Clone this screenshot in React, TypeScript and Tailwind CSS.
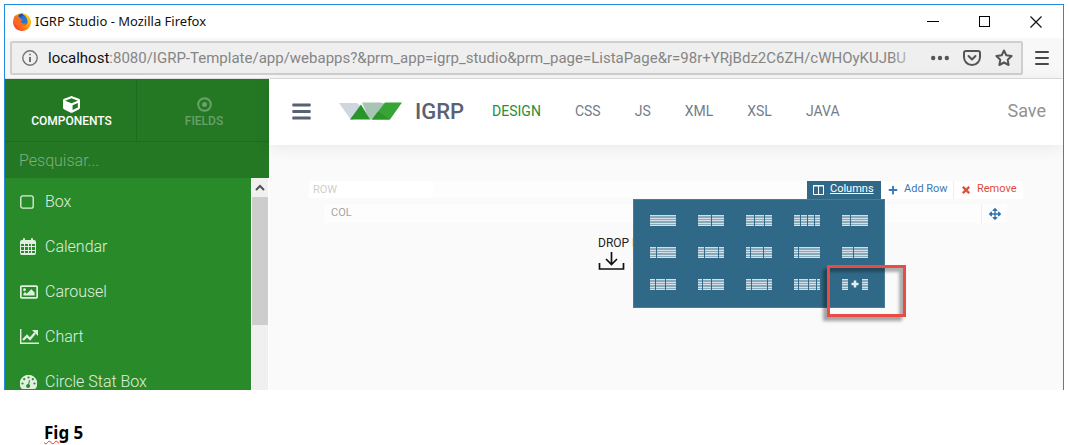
import { useState } from "react";
import type { ReactNode } from "react";
import {
  FaCube,
  FaBars,
  FaPlus,
  FaTimes,
  FaArrowsAlt,
  FaRegImage,
} from "react-icons/fa";

const BAR_WIDTHS: number[][] = [
  [26],
  [13, 13],
  [8, 9, 8],
  [6, 6, 6, 6],
  [8, 17],
  [6, 20],
  [6, 14, 6],
  [4, 13, 9],
  [4, 22],
  [11, 15],
  [5, 9, 11],
  [4, 9, 13],
  [5, 16, 5],
  [4, 9, 7, 4],
];

function Stripes({ widths }: { widths: number[] }) {
  const total = widths.reduce((a, b) => a + b, 0);
  const usable = 26 - (widths.length - 1);
  let x = 0;
  return (
    <svg width="26" height="11" viewBox="0 0 26 11" aria-hidden="true">
      {widths.map((w, i) => {
        const width = Math.round((w / total) * usable);
        const start = x;
        x += width + 1;
        return (
          <g key={i}>
            <rect x={start} y="0" width={width} height="11" fill="#87a9bb" />
            {[0, 3, 5, 8, 10].map((y) => (
              <rect key={y} x={start} y={y} width={width} height="1" fill="#d3e0e7" />
            ))}
          </g>
        );
      })}
    </svg>
  );
}

function FirefoxIcon() {
  return (
    <svg width="18" height="18" viewBox="0 0 18 18" aria-hidden="true">
      <defs>
        <linearGradient id="flame" x1="1" y1="0" x2="0" y2="1">
          <stop offset="0" stopColor="#ffe226" />
          <stop offset="0.5" stopColor="#ff9400" />
          <stop offset="1" stopColor="#f0224b" />
        </linearGradient>
      </defs>
      <path d="M9 0c5 1 9 4 9 9s-4 9-9 9-9-4-9-9c0-3 1-5 3-7C5 1 7 0 9 0Z" fill="url(#flame)" />
      <circle cx="9" cy="7.500" r="5.800" fill="#2675d5" />
      <path d="M5 2 9 .5l2 2-4 2Z" fill="#244f9d" />
      <path d="M1 5c0-1 1-2 2-2.500L4 4q2-.5 3 .5c0 1.500 1 1.500 3 2L8 8c0 2 2 3 5 2-1 3-3 4-6 3-4-1-6-4-6-8Z" fill="#ff6a1b" />
      <path d="M11 1c5 2 6 6 4 10 0-4-1-6-4-10Z" fill="#ffc21c" />
    </svg>
  );
}

function Logo() {
  return (
    <svg width="64" height="18" viewBox="0 0 64 18" role="img" aria-label="IGRP logo">
      <path d="M0 1h18l5 4-9 13h-2Z" fill="#d0d6df" />
      <path d="M23 .5h18l5 1-11 16h-5Z" fill="#a8c4b5" />
      <path d="M22 2.500 11 17.500h20Z" fill="#29942b" />
      <path d="M46 .5h17l-12 17H33Z" fill="#37a436" />
      <path d="m39 9.500-6 8h18Z" fill="#299629" />
    </svg>
  );
}

function BoxIcon() {
  return (
    <svg width="14" height="14" viewBox="0 0 14 14" fill="none" stroke="currentColor" strokeWidth="1.300" aria-hidden="true">
      <rect x=".8" y=".8" width="12.400" height="12.400" rx="2" />
    </svg>
  );
}

function CalendarIcon() {
  return (
    <svg width="16" height="17" viewBox="0 0 16 17" aria-hidden="true">
      <path fill="currentColor" fillRule="evenodd" d="M2 2h1V1q0-1 1-1t1 1v1h6V1q0-1 1-1t1 1v1h1q2 0 2 2v11q0 2-2 2H2q-2 0-2-2V4q0-2 2-2ZM1 6v2h3V6Zm4 0v2h3V6Zm4 0v2h2V6Zm3 0v2h3V6ZM1 9v3h3V9Zm4 0v3h3V9Zm4 0v3h2V9Zm3 0v3h3V9ZM1 13v2h3v-2Zm4 0v2h3v-2Zm4 0v2h2v-2Zm3 0v2h3v-2Z" />
    </svg>
  );
}

function ChartIcon() {
  return (
    <svg width="19" height="15" viewBox="0 0 19 15" fill="none" aria-hidden="true">
      <path d="M.7 0v14.2H19" stroke="currentColor" strokeWidth="1.4" />
      <path d="m3 11 4-4 3 3 5-6" stroke="currentColor" strokeWidth="2.3" />
      <path d="M12 1h6v6Z" fill="currentColor" />
    </svg>
  );
}

function GaugeIcon() {
  return (
    <svg width="17" height="14" viewBox="0 0 17 14" aria-hidden="true">
      <path d="M8.5 0A8.5 8.5 0 0 0 1 13q.5 1 1.500 1h12q1 0 1.500-1A8.500 8.500 0 0 0 8.500 0Z" fill="currentColor" />
      <g fill="#298a29">
        <circle cx="8.500" cy="2.500" r="1.100" />
        <circle cx="4.200" cy="4.200" r="1.100" />
        <circle cx="12.800" cy="4.200" r="1.100" />
        <circle cx="2.500" cy="8.500" r="1.100" />
        <circle cx="14.500" cy="8.500" r="1.100" />
        <path d="m9 5 1 .3-.8 4a2 2 0 1 1-1-.3Z" />
      </g>
    </svg>
  );
}

const COMPONENTS: { name: string; icon: ReactNode }[] = [
  { name: "Box", icon: <BoxIcon /> },
  { name: "Calendar", icon: <CalendarIcon /> },
  { name: "Carousel", icon: <FaRegImage size={18} /> },
  { name: "Chart", icon: <ChartIcon /> },
  { name: "Circle Stat Box", icon: <GaugeIcon /> },
];

function TitleBar() {
  return (
    <header className="flex h-[33px] shrink-0 items-center bg-white pl-2 pr-[21px]">
      <FirefoxIcon />
      <h1 className="ml-1 grow font-['Noto_Sans','Open_Sans',sans-serif] text-[13px] text-[#111]">IGRP Studio - Mozilla Firefox</h1>
      <div className="flex items-center gap-10">
        <button aria-label="Minimize" className="flex h-4 w-3 items-center"><span className="h-px w-full bg-black" /></button>
        <button aria-label="Maximize" className="size-[11px] border border-black" />
        <button aria-label="Close">
          <svg width="12" height="12" viewBox="0 0 12 12" stroke="#111" strokeWidth="1.2"><path d="m.5.5 11 11m0-11-11 11" /></svg>
        </button>
      </div>
    </header>
  );
}

function AddressBar() {
  return (
    <div className="flex h-[41px] shrink-0 items-center gap-3 border-b border-[#dedede] bg-[#f8f8f8] pl-[5px] pr-3.5">
      <div className="flex h-[34px] min-w-0 grow items-center rounded-xs border-2 border-[#cfcfcf] bg-[#efefef] pl-2.5 pr-2">
        <svg width="16" height="16" viewBox="0 0 16 16" fill="none" stroke="#737373" className="shrink-0" aria-hidden="true">
          <circle cx="8" cy="8" r="7.200" strokeWidth="1.400" />
          <path d="M8 7v5" strokeWidth="2" />
          <circle cx="8" cy="4.500" r=".6" />
        </svg>
        <div className="relative ml-2.5 min-w-0 grow overflow-hidden whitespace-nowrap font-[Roboto,'Noto_Sans',sans-serif] text-[15px] text-[#858585]">
          <span className="text-[#111]">localhost</span>:8080/IGRP-Template/app/webapps?&amp;prm_app=igrp_studio&amp;prm_page=ListaPage&amp;r=98r+YRjBdz2C6ZH/cWHOyKUJBU
          <span className="absolute inset-y-0 right-0 w-8 bg-linear-to-r from-transparent to-[#efefef]" />
        </div>
        <div className="ml-2 flex shrink-0 items-center gap-3.5 text-[#555]">
          <button aria-label="Page actions">
            <svg width="18" height="6" viewBox="0 0 18 6" fill="currentColor"><circle cx="2.200" cy="3" r="2.200" /><circle cx="9" cy="3" r="2.200" /><circle cx="15.800" cy="3" r="2.200" /></svg>
          </button>
          <button aria-label="Save to Pocket">
            <svg width="18" height="16" viewBox="0 0 18 16" fill="none" stroke="currentColor" strokeWidth="2" strokeLinecap="round" strokeLinejoin="round"><path d="M3 1h12q2 0 2 2v4c0 4-3 8-8 8S1 11 1 7V3q0-2 2-2ZM5.500 6 9 9.500 12.500 6" /></svg>
          </button>
          <button aria-label="Bookmark this page">
            <svg width="18" height="18" viewBox="0 0 18 18" fill="none" stroke="currentColor" strokeWidth="2" strokeLinejoin="round"><path d="m9 1.500 2.300 4.800 5.300.7-3.900 3.700.9 5.300L9 13.500 4.400 16l.9-5.300L1.400 7l5.300-.7Z" /></svg>
          </button>
        </div>
      </div>
      <button aria-label="Open menu" className="text-[#484848]">
        <svg width="14" height="14" viewBox="0 0 14 14" stroke="currentColor" strokeWidth="2" strokeLinecap="round"><path d="M1 1h12M1 7h12M1 13h12" /></svg>
      </button>
    </div>
  );
}

function Sidebar() {
  return (
    <aside className="flex w-[264px] shrink-0 flex-col bg-[#298a29]">
      <div className="grid h-[63px] shrink-0 grid-cols-2 border-b border-[#1e6b22] bg-[#247824] text-xs font-medium">
        <button className="flex flex-col items-center border-r border-[#1e6b22] pl-0.5 pt-[17px] leading-4 text-white">
          <FaCube size={17} />
          <span>COMPONENTS</span>
        </button>
        <button className="flex flex-col items-center pl-0.5 pt-[17px] leading-4 text-[#69a169]">
          <svg width="17" height="17" viewBox="0 0 17 17" fill="none" stroke="currentColor" strokeWidth="2" aria-hidden="true"><circle cx="8.500" cy="8.500" r="6.300" /><circle cx="8.500" cy="8.500" r="2.500" fill="currentColor" stroke="none" /></svg>
          <span>FIELDS</span>
        </button>
      </div>
      <input aria-label="Pesquisar" placeholder="Pesquisar..." className="h-9 w-full shrink-0 bg-[#247824] px-3.5 text-base font-light text-white outline-none placeholder:text-[#80ae80]" />
      <div className="flex min-h-0 grow">
        <ul className="grow overflow-hidden pt-px">
          {COMPONENTS.map((c) => (
            <li key={c.name}>
              <a href="#" className="flex h-[45px] items-center pl-[15px] text-base font-light text-[#e0efe0]">
                <span className="w-[25px]">{c.icon}</span>
                {c.name}
              </a>
            </li>
          ))}
        </ul>
        <div className="w-[18px] border-x border-white bg-[#f0f0f0]" aria-hidden="true">
          <div className="flex h-[19px] items-center justify-center">
            <svg width="10" height="7" viewBox="0 0 10 7" fill="none" stroke="#505050" strokeWidth="2"><path d="m1 6 4-4 4 4" /></svg>
          </div>
          <div className="h-32 bg-[#cdcdcd]" />
        </div>
      </div>
    </aside>
  );
}

function TopNav() {
  return (
    <nav className="relative flex h-[66px] shrink-0 items-center bg-white pb-0.5 pl-[22px] pr-[17px] shadow-[0_2px_16px_rgba(0,0,0,0.08)]">
      <button aria-label="Toggle menu" className="text-[#596174]"><FaBars size={21} /></button>
      <a href="#" className="ml-[27px] flex items-center gap-3">
        <Logo />
        <span className="text-[22px] font-medium text-[#596174]">IGRP</span>
      </a>
      <div className="ml-7 flex grow gap-[34px] text-sm text-[#747c8a]">
        <a href="#" className="text-[#278e36]">DESIGN</a>
        <a href="#">CSS</a>
        <a href="#">JS</a>
        <a href="#">XML</a>
        <a href="#">XSL</a>
        <a href="#">JAVA</a>
      </div>
      <button className="text-lg text-[#929292]">Save</button>
    </nav>
  );
}

function ColumnPicker() {
  return (
    <div className="absolute right-[-4px] top-full z-10 grid h-[109px] w-[252px] grid-cols-5 content-start border border-[#4b7c97] bg-[#306987] px-[5px] pt-[5px]">
      {BAR_WIDTHS.map((w, i) => (
        <button key={i} aria-label={`Layout ${i + 1}`} className="flex h-8 items-center justify-center"><Stripes widths={w} /></button>
      ))}
      <button aria-label="Custom layout" className="relative flex h-8 items-center justify-center">
        <svg width="26" height="11" viewBox="0 0 26 11" aria-hidden="true">
          <path d="M0 0h6v11H0Zm20 0h6v11h-6Z" fill="#87a9bb" />
          <path d="M0 .5h6M0 3.500h6M0 5.500h6M0 8.500h6M0 10.500h6M20 .5h6M20 3.500h6M20 5.500h6M20 8.500h6M20 10.500h6" stroke="#d3e0e7" />
          <path d="M13 1.500v7M9.500 5h7" stroke="#e4edf1" strokeWidth="2.500" />
        </svg>
        <span className="absolute -left-1 -top-1 h-[52px] w-[79px] border-[3px] border-[#e94b45] shadow-[-4px_4px_3px_rgba(0,0,0,0.35),inset_-4px_4px_3px_rgba(0,0,0,0.3)]" />
      </button>
    </div>
  );
}

function Canvas() {
  const [open, setOpen] = useState(true);
  return (
    <main className="min-h-0 grow pl-10 pr-10 pt-9">
      <div className="flex h-[17px] items-center justify-between bg-[#fdfdfd] text-[11px]">
        <span className="w-[124px] bg-white pl-1 leading-[17px] text-[#cecece]">ROW</span>
        <div className="flex h-[18px]">
          <div className="relative">
            <button onClick={() => setOpen(!open)} className="flex h-full w-[74px] items-center gap-1.5 bg-[#306987] pl-1.5 text-white">
              <svg width="11" height="10" viewBox="0 0 11 10" fill="none" stroke="currentColor" aria-hidden="true"><path d="M.5.500h10v9H.5ZM0 1h11M5.500 0v10" /></svg>
              <span className="underline">Columns</span>
            </button>
            {open && <ColumnPicker />}
          </div>
          <button className="flex w-[73px] items-center gap-1.5 border-r border-[#eee] bg-white pl-[7px] text-[#3b79b5]"><FaPlus size={10} />Add Row</button>
          <button className="flex w-[69px] items-center gap-1.5 bg-white pl-[7px] text-[#dd4b39]">
            <FaTimes size={10} strokeWidth={40} stroke="currentColor" />Remove
          </button>
        </div>
      </div>
      <div className="ml-[15px] mr-4 mt-1.5 flex h-[19px] items-center justify-between bg-[#fdfdfd] pl-[7px] text-[11px] text-[#a5a5a5]">
        COL
        <button aria-label="Move column" className="flex h-full w-[26px] items-center justify-center border-l border-[#eee] text-[#2e72ae]"><FaArrowsAlt size={12} /></button>
      </div>
      <div className="ml-[289px] mt-3 w-20 text-[12px] leading-4 text-[#222]">
        <div className="whitespace-nowrap">DROP HERE</div>
        <svg width="27" height="20" viewBox="0 0 27 20" fill="none" stroke="#111" strokeWidth="1.700" aria-hidden="true"><path d="M1.500 12v6h24v-6M13.500 1v12M8 8l5.500 5.500L19 8" /></svg>
      </div>
    </main>
  );
}

export default function App() {
  return (
    <div className="bg-white pl-1 pr-[5px] pt-1 font-[Roboto,sans-serif]">
      <div className="flex h-[386px] flex-col overflow-hidden border-x border-t border-[#238bdc]">
        <TitleBar />
        <AddressBar />
        <div className="flex min-h-0 grow">
          <Sidebar />
          <div className="flex min-w-0 grow flex-col bg-[#fafafa]">
            <TopNav />
            <Canvas />
          </div>
        </div>
      </div>
      <p className="ml-10 mt-[31px] font-['Noto_Sans','Open_Sans',sans-serif] text-[17px] font-bold leading-6 text-black">
        <span className="underline decoration-red-500 decoration-wavy decoration-1">Fig</span> 5
      </p>
    </div>
  );
}
